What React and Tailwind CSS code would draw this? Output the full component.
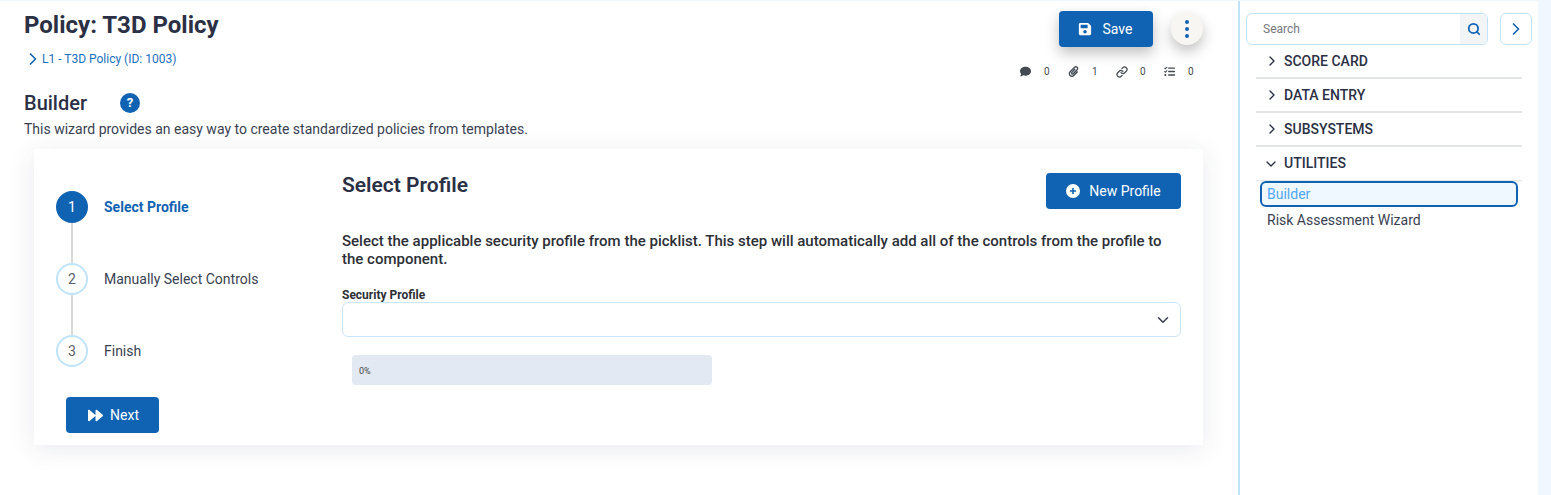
import { FaSave, FaForward, FaComment, FaPaperclip, FaTasks } from 'react-icons/fa';
import { ChevronRight, ChevronDown, Search, Link } from 'lucide-react';

const counts = [
  { icon: <FaComment className="text-[11px] shrink-0" />, value: 0 },
  { icon: <FaPaperclip className="text-[11px] shrink-0" />, value: 1 },
  { icon: <Link size={12} strokeWidth={2.5} className="shrink-0" />, value: 0 },
  { icon: <FaTasks className="text-[11px] shrink-0" />, value: 0 },
];

const steps = [
  { n: 1, label: 'Select Profile', active: true },
  { n: 2, label: 'Manually Select Controls' },
  { n: 3, label: 'Finish' },
];

const sections = [
  { name: 'SCORE CARD' },
  { name: 'DATA ENTRY' },
  { name: 'SUBSYSTEMS' },
  { name: 'UTILITIES', open: true },
];

function Stepper() {
  return (
    <div className="w-[308px] shrink-0 pl-[22px] pt-[42px]">
      {steps.map((step, idx) => (
        <div key={step.n} className="flex">
          <div className="flex flex-col items-center w-8">
            <div
              className={`w-8 h-8 rounded-full flex items-center justify-center text-[14px] ${
                step.active ? 'bg-[#1063b2] text-white' : 'border-2 border-[#bfe3fb] text-[#5a5f6b]'
              }`}
            >
              {step.n}
            </div>
            {idx < steps.length - 1 && <div className="w-[2px] h-10 bg-[#d9d9d9]" />}
          </div>
          <div
            className={`ml-4 h-8 flex items-center text-[14px] ${
              step.active ? 'font-bold text-[#1063b2]' : 'text-[#3a3f52]'
            }`}
          >
            {step.label}
          </div>
        </div>
      ))}
      <button className="mt-[30px] ml-[10px] w-[93px] h-9 rounded bg-[#1063b2] text-white text-[14px] flex items-center justify-center gap-[7px] pl-[2px]">
        <FaForward className="text-[15px]" />
        Next
      </button>
    </div>
  );
}

function ProfilePanel() {
  return (
    <div className="flex-1 pr-[22px] pt-6">
      <div className="flex items-start justify-between">
        <h2 className="text-[21px] leading-6 font-semibold text-[#2b3045]">Select Profile</h2>
        <button className="w-[135px] h-9 rounded bg-[#1063b2] text-white text-[14px] flex items-center justify-center gap-[9px]">
          <svg width="14" height="14" viewBox="0 0 14 14">
            <circle cx="7" cy="7" r="7" fill="#fff" />
            <path d="M7 4v6M4 7h6" stroke="#1063b2" strokeWidth="1.6" />
          </svg>
          New Profile
        </button>
      </div>
      <p className="mt-[23px] text-[15px] leading-[18px] font-medium text-[#2d2f36]">
        Select the applicable security profile from the picklist. This step will automatically add all of the controls from the profile to the component.
      </p>
      <label className="block mt-[21px] text-[12px] leading-[13px] font-bold text-[#2d2f36]">Security Profile</label>
      <div className="h-[35px] rounded-md border border-[#cbe6fb] flex items-center justify-end pr-[8px]">
        <ChevronDown size={18} strokeWidth={2} className="text-[#3a3f52]" />
      </div>
      <div className="mt-[18px] ml-[10px] w-[360px] h-[30px] rounded bg-[#e2e9f3] flex items-center pl-[7px] pt-[3px] text-[9px] text-[#444]">
        0%
      </div>
    </div>
  );
}

function Sidebar() {
  return (
    <aside className="w-[298px] shrink-0 pl-[6px] pt-[12px]">
      <div className="flex gap-3">
        <div className="w-[242px] h-8 rounded-md border border-[#bfe3fb] flex overflow-hidden">
          <div className="flex-1 pl-4 flex items-center text-[12px] text-[#75777d]">Search</div>
          <div className="w-[27px] bg-[#f2f4f6] flex items-center justify-center">
            <Search size={14} strokeWidth={3} className="text-[#1063b2]" />
          </div>
        </div>
        <button className="w-8 h-8 rounded-md border border-[#bfe3fb] flex items-center justify-center">
          <ChevronRight size={20} strokeWidth={2} className="text-[#1063b2]" />
        </button>
      </div>
      <div className="ml-[10px] w-[266px]">
        {sections.map((s) => (
          <div
            key={s.name}
            className={`h-[34px] flex items-center pl-[8px] text-[14px] font-medium text-[#2b3045] ${
              s.open ? 'border-b border-[#e3e6e6]' : 'border-b-2 border-[#e3e6e6]'
            }`}
          >
            {s.open ? <ChevronDown size={16} className="mr-[5px] -ml-[1px]" /> : <ChevronRight size={16} className="mr-[4px]" />}
            {s.name}
          </div>
        ))}
      </div>
      <div className="ml-[14px] w-[258px]">
        <div className="h-[26px] rounded-md border-2 border-[#1063b2] bg-[#eff7ff] pl-[5px] flex items-center text-[14px] text-[#4fa8f5]">
          Builder
        </div>
        <div className="h-[26px] pl-[7px] flex items-center text-[14px] text-[#3a3f52]">Risk Assessment Wizard</div>
      </div>
    </aside>
  );
}

export default function App() {
  return (
    <div className="h-[495px] overflow-hidden bg-white border-t border-[#f0f7ff] flex antialiased font-['Roboto',sans-serif]">
      <main className="w-[1240px] shrink-0 pl-6 border-r-2 border-[#bfe3fb]">
        <div className="flex">
          <div className="w-[1000px] shrink-0">
            <h1 className="mt-[9px] text-[24px] leading-[30px] font-bold text-[#2b3045]">Policy: T3D Policy</h1>
            <div className="mt-[9px] flex items-center text-[12px] leading-[18px] text-[#1a6fbe]">
              <ChevronRight size={20} strokeWidth={2} className="-ml-[1px] -mr-[1px] text-[#1063b2]" />
              L1 - T3D Policy (ID: 1003)
            </div>
          </div>
          <div className="w-[190px] shrink-0 pt-[10px]">
            <div className="flex items-center">
              <button className="ml-[35px] w-[94px] h-9 rounded bg-[#1063b2] text-white text-[14px] flex items-center justify-center gap-[11px] pr-[2px] shadow-[0_6px_14px_rgba(0,0,0,0.25)]">
                <FaSave className="text-[14px]" />
                Save
              </button>
              <button className="ml-[18px] w-8 h-8 rounded-full bg-[#f7f6f3] flex flex-col items-center justify-center gap-[3px] shadow-[0_6px_14px_rgba(0,0,0,0.25)]">
                <span className="w-1 h-1 rounded-full bg-[#1063b2]" />
                <span className="w-1 h-1 rounded-full bg-[#1063b2]" />
                <span className="w-1 h-1 rounded-full bg-[#1063b2]" />
              </button>
            </div>
            <div className="mt-[17px] ml-[-4px] flex items-center text-[10px] text-[#444a52]">
              {counts.map((c, i) => (
                <div key={i} className="w-12 shrink-0 flex items-center gap-[13px]">
                  <span className="w-[11px] flex justify-center">{c.icon}</span>
                  {c.value}
                </div>
              ))}
            </div>
          </div>
        </div>
        <div className="mt-[12px] flex items-center h-6">
          <h2 className="text-[20px] font-medium text-[#2b3045]">Builder</h2>
          <div className="ml-[33px] w-5 h-5 rounded-full bg-[#1063b2] text-white text-[13px] font-bold flex items-center justify-center">?</div>
        </div>
        <p className="mt-[4px] text-[14px] leading-5 text-[#3a3f52]">
          This wizard provides an easy way to create standardized policies from templates.
        </p>
        <div className="mt-[10px] ml-[10px] w-[1169px] h-[296px] flex bg-white shadow-[0_4px_24px_rgba(40,50,90,0.1)]">
          <Stepper />
          <ProfilePanel />
        </div>
      </main>
      <Sidebar />
      <div className="flex-1 bg-[#f0f7ff]" />
    </div>
  );
}
